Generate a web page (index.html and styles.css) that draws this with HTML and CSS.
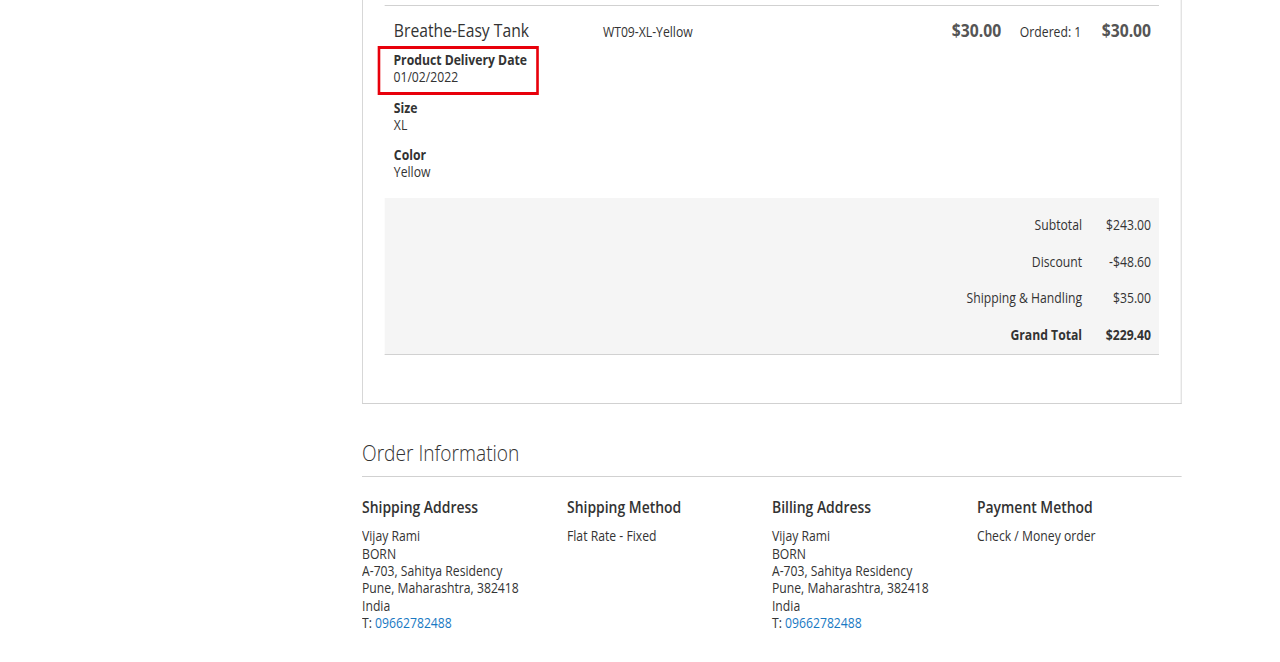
FILE: index.html
```html
<!DOCTYPE html>
<html lang="en">
<head>
<meta charset="utf-8">
<title>Order</title>
<link rel="stylesheet" href="styles.css">
</head>
<body>
<main class="page">
  <section class="order-box">
    <div class="item-row">
      <div class="col-name">
        <div class="product-name">Breathe-Easy Tank</div>
        <dl class="options">
          <div class="opt highlight">
            <dt>Product Delivery Date</dt>
            <dd>01/02/2022</dd>
          </div>
          <div class="opt">
            <dt>Size</dt>
            <dd>XL</dd>
          </div>
          <div class="opt">
            <dt>Color</dt>
            <dd>Yellow</dd>
          </div>
        </dl>
      </div>
      <div class="col-sku">WT09-XL-Yellow</div>
      <div class="col-prices">
        <span class="price">$30.00</span>
        <span class="qty">Ordered: 1</span>
        <span class="price">$30.00</span>
      </div>
    </div>
    <div class="totals">
      <div class="t-label">Subtotal</div><div class="t-val">$243.00</div>
      <div class="t-label">Discount</div><div class="t-val">-$48.60</div>
      <div class="t-label">Shipping &amp; Handling</div><div class="t-val">$35.00</div>
      <div class="t-label grand">Grand Total</div><div class="t-val grand">$229.40</div>
    </div>
  </section>

  <section class="order-info">
    <h2 class="info-title">Order Information</h2>
    <div class="info-cols">
      <div class="info-col">
        <h3>Shipping Address</h3>
        <address>Vijay Rami<br>BORN<br>A-703, Sahitya Residency<br>Pune, Maharashtra, 382418<br>India<br>T: <a href="#">09662782488</a></address>
      </div>
      <div class="info-col">
        <h3>Shipping Method</h3>
        <p>Flat Rate - Fixed</p>
      </div>
      <div class="info-col">
        <h3>Billing Address</h3>
        <address>Vijay Rami<br>BORN<br>A-703, Sahitya Residency<br>Pune, Maharashtra, 382418<br>India<br>T: <a href="#">09662782488</a></address>
      </div>
      <div class="info-col">
        <h3>Payment Method</h3>
        <p>Check / Money order</p>
      </div>
    </div>
  </section>
</main>
</body>
</html>
```

FILE: styles.css
```css
* { box-sizing: border-box; }
html, body { margin: 0; padding: 0; background: #fff; }
body {
  font-family: "Open Sans", "Liberation Sans", sans-serif;
  font-size: 14px;
  line-height: 17.4px;
  color: #333;
}
/* the reference is rendered slightly condensed horizontally */
.page {
  width: 941.4px;
  margin-left: 362px;
  transform: scaleX(0.871);
  transform-origin: left top;
}
.order-box {
  border: 1px solid #d1d1d1;
  border-top: none;
  padding: 5px 25.3px 48px 25.3px;
}
.item-row {
  border-top: 1px solid #d1d1d1;
  display: flex;
  padding: 14px 9.2px 6px 10.3px;
}
.col-name { width: 240px; }
.product-name {
  font-size: 18px;
  line-height: 20px;
  color: #333;
}
.options { margin: 6px 0 0 0; }
.opt { margin-bottom: 12px; }
.opt dt { font-weight: 700; }
.opt dd { margin: 0; }
.opt.highlight {
  display: inline-block;
  border: 3px solid #e8000b;
  margin: 0 0 4px -18.4px;
  padding: 2px 11px 6px 14.9px;
}
.col-sku {
  flex: 1;
  line-height: 20px;
  padding-top: 2px;
}
.col-prices {
  display: flex;
  align-items: baseline;
  line-height: 20px;
}
.price {
  font-size: 18px;
  font-weight: 700;
  color: #555;
}
.qty {
  margin: 0 23.5px 0 21.5px;
  color: #333;
}
.totals {
  background: #f5f5f5;
  border-bottom: 1px solid #d1d1d1;
  display: grid;
  grid-template-columns: 1fr 79.2px;
  padding: 8px 9.2px 1px 0;
}
.t-label, .t-val {
  text-align: right;
  padding: 9.6px 0;
}
.grand { font-weight: 700; }
.order-info { margin-top: 36px; }
.info-title {
  margin: 0;
  font-size: 22px;
  font-weight: 300;
  line-height: 24px;
  padding-bottom: 12px;
  border-bottom: 1px solid #d1d1d1;
}
.info-cols {
  display: grid;
  grid-template-columns: repeat(4, 1fr);
  padding-top: 22px;
}
.info-col h3 {
  margin: 0 0 11px 0;
  font-size: 16px;
  font-weight: 600;
  line-height: 17.4px;
}
.info-col address, .info-col p {
  margin: 0;
  font-style: normal;
}
.info-col a {
  color: #1979c3;
  text-decoration: none;
}
```
